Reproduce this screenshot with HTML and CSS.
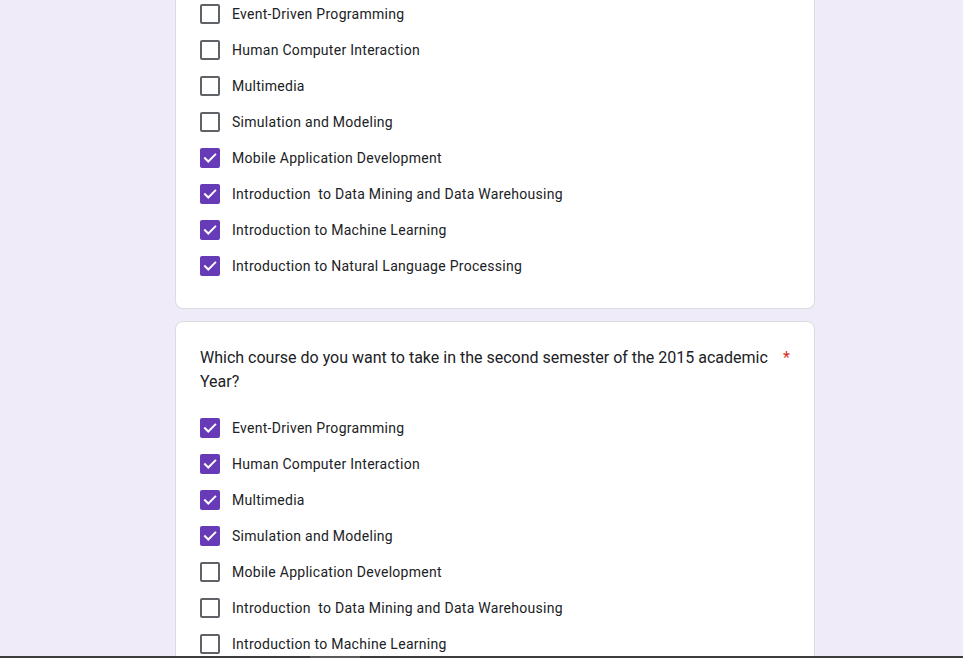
FILE: index.html
```html
<!DOCTYPE html>
<html>
<head>
<meta charset="utf-8">
<link rel="stylesheet" href="styles.css">
</head>
<body>
<div class="page">
  <div class="card card-top">
    <div class="options">
      <div class="opt"><span class="box"></span><span class="label">Event-Driven Programming</span></div>
      <div class="opt"><span class="box"></span><span class="label">Human Computer Interaction</span></div>
      <div class="opt"><span class="box"></span><span class="label">Multimedia</span></div>
      <div class="opt"><span class="box"></span><span class="label">Simulation and Modeling</span></div>
      <div class="opt"><span class="box on"><svg viewBox="0 0 20 20"><path d="M5 10.2l3.3 3.3L15.2 6.6"/></svg></span><span class="label">Mobile Application Development</span></div>
      <div class="opt"><span class="box on"><svg viewBox="0 0 20 20"><path d="M5 10.2l3.3 3.3L15.2 6.6"/></svg></span><span class="label">Introduction&nbsp; to Data Mining and Data Warehousing</span></div>
      <div class="opt"><span class="box on"><svg viewBox="0 0 20 20"><path d="M5 10.2l3.3 3.3L15.2 6.6"/></svg></span><span class="label">Introduction to Machine Learning</span></div>
      <div class="opt"><span class="box on"><svg viewBox="0 0 20 20"><path d="M5 10.2l3.3 3.3L15.2 6.6"/></svg></span><span class="label">Introduction to Natural Language Processing</span></div>
    </div>
  </div>
  <div class="card">
    <div class="question">
      <span class="qtext">Which course do you want to take in the second semester of the 2015 academic Year?</span>
      <span class="req">*</span>
    </div>
    <div class="options">
      <div class="opt"><span class="box on"><svg viewBox="0 0 20 20"><path d="M5 10.2l3.3 3.3L15.2 6.6"/></svg></span><span class="label">Event-Driven Programming</span></div>
      <div class="opt"><span class="box on"><svg viewBox="0 0 20 20"><path d="M5 10.2l3.3 3.3L15.2 6.6"/></svg></span><span class="label">Human Computer Interaction</span></div>
      <div class="opt"><span class="box on"><svg viewBox="0 0 20 20"><path d="M5 10.2l3.3 3.3L15.2 6.6"/></svg></span><span class="label">Multimedia</span></div>
      <div class="opt"><span class="box on"><svg viewBox="0 0 20 20"><path d="M5 10.2l3.3 3.3L15.2 6.6"/></svg></span><span class="label">Simulation and Modeling</span></div>
      <div class="opt"><span class="box"></span><span class="label">Mobile Application Development</span></div>
      <div class="opt"><span class="box"></span><span class="label">Introduction&nbsp; to Data Mining and Data Warehousing</span></div>
      <div class="opt"><span class="box"></span><span class="label">Introduction to Machine Learning</span></div>
      <div class="opt"><span class="box"></span><span class="label">Introduction to Natural Language Processing</span></div>
    </div>
  </div>
</div>
<div class="taskbar"><span class="seg"></span></div>
</body>
</html>
```
FILE: styles.css
```css
html, body {
  margin: 0;
  padding: 0;
  height: 100%;
  overflow: hidden;
}
body {
  background: #f0ebf8;
  font-family: Roboto, "Liberation Sans", Arial, sans-serif;
  color: #202124;
}
.page {
  width: 640px;
  margin-left: 175px;
  margin-top: -4px;
  display: flex;
  flex-direction: column;
  gap: 12px;
}
.card {
  background: #fff;
  border: 1px solid #dadce0;
  border-radius: 8px;
  padding: 24px;
}
.card-top {
  border-top: none;
  border-top-left-radius: 0;
  border-top-right-radius: 0;
  padding-top: 0;
}
.question {
  display: flex;
  align-items: flex-start;
  font-size: 16px;
  line-height: 24px;
  letter-spacing: 0;
  margin-bottom: 16px;
}
.qtext {
  width: 576px;
}
.req {
  color: #d93025;
  margin-left: 7px;
  font-size: 16px;
}
.options {
  display: flex;
  flex-direction: column;
}
.opt {
  display: flex;
  align-items: center;
  gap: 12px;
  height: 36px;
}
.box {
  width: 20px;
  height: 20px;
  box-sizing: border-box;
  border: 2px solid #5f6368;
  border-radius: 2px;
  flex: none;
  display: flex;
  align-items: center;
  justify-content: center;
}
.box.on {
  background: #673ab7;
  border-color: #673ab7;
}
.box svg {
  width: 20px;
  height: 20px;
  flex: none;
}
.box svg path {
  fill: none;
  stroke: #fff;
  stroke-width: 2;
  stroke-linecap: square;
}
.label {
  font-size: 14px;
  letter-spacing: 0.28px;
  line-height: 20px;
}
.taskbar {
  position: fixed;
  left: 0;
  right: 0;
  bottom: 0;
  height: 2px;
  background: #3c3c3c;
}
.seg {
  position: absolute;
  left: 310px;
  width: 50px;
  top: 0;
  height: 2px;
  background: #5a5a5a;
}
```
